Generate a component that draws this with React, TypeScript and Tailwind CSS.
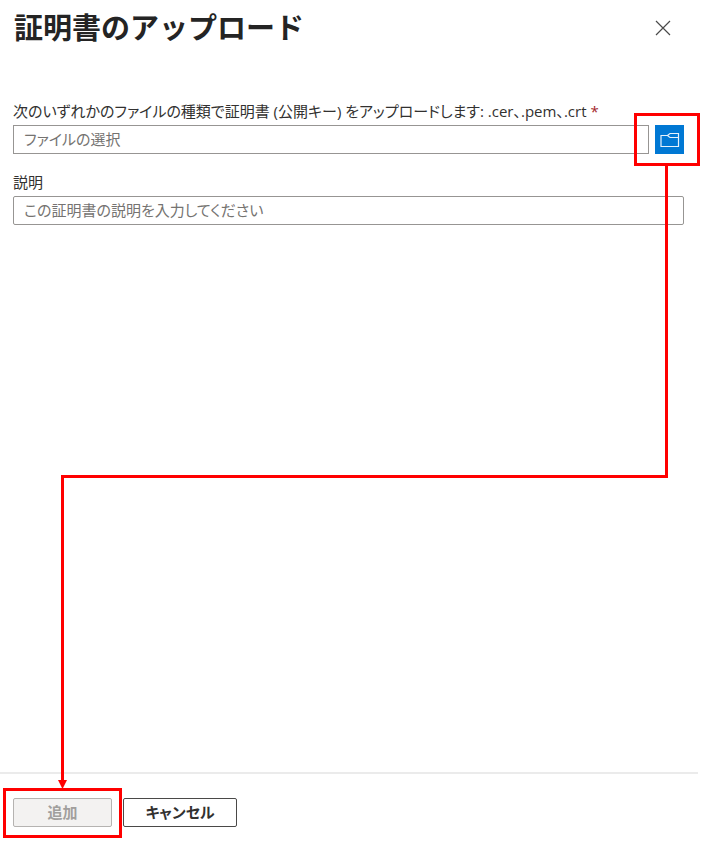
const fieldClass =
  "h-[29px] min-w-0 flex-1 border border-[#979593] bg-white px-[10px] pb-[2px] text-[15px] text-[#323130] outline-none placeholder:text-[#757371] placeholder:opacity-100";

function CloseIcon() {
  return (
    <svg width="16" height="16" viewBox="0 0 16 16" fill="none" stroke="#4a4a4a" strokeWidth="1.2" aria-hidden="true">
      <path d="M1 1l14 14M15 1L1 15" />
    </svg>
  );
}

function FolderIcon() {
  return (
    <svg width="20" height="16" viewBox="0 0 20 16" fill="none" stroke="#e6f2fc" strokeWidth="1.2" aria-hidden="true">
      <path d="M8.5 3.5H1v11h17.5v-13H10L8 3v1l2 1.5h8.5" />
    </svg>
  );
}

/* Red line that leads from the file button down to the add button */
function Connector() {
  return (
    <div className="pointer-events-none absolute inset-0" aria-hidden="true">
      <div className="absolute top-[165px] right-[35px] left-[61px] h-[313px] border-r-3 border-b-3 border-[#ff0000]" />
      <div className="absolute top-[475px] bottom-[62px] left-[61px] w-[3px] bg-[#ff0000]" />
      <svg className="absolute bottom-[55px] left-[57px]" width="11" height="9" viewBox="0 0 11 9">
        <path d="M1 0h9L5.5 9z" fill="#ff0000" />
      </svg>
    </div>
  );
}

export default function App() {
  return (
    <div
      lang="ja"
      className="relative flex min-h-screen flex-col bg-white font-['Open_Sans','Noto_Sans_CJK_JP',sans-serif] text-[#323130]"
    >
      <header className="flex h-14 items-center justify-between pr-[32px] pl-[14px]">
        <h1 className="text-[29px] leading-[50px] font-bold text-[#242424]">証明書のアップロード</h1>
        <button type="button" aria-label="閉じる" className="flex size-4 items-center justify-center">
          <CloseIcon />
        </button>
      </header>

      <main className="flex-1 pt-[43px] pr-[19px] pl-[13px] [font-feature-settings:'palt']">
        <label htmlFor="file" className="block pb-[2px] text-[15px] leading-6">
          次のいずれかのファイルの種類で証明書 (公開キー) をアップロードします: .cer、.pem、.crt{" "}
          <span className="text-[#a4262c]">*</span>
        </label>
        <div className="flex gap-[6px]">
          <input id="file" type="text" readOnly placeholder="ファイルの選択" className={fieldClass} />
          <div className="relative size-[29px]">
            <button
              type="button"
              aria-label="ファイルの参照"
              className="flex size-[29px] items-center justify-center bg-[#0078d4]"
            >
              <FolderIcon />
            </button>
            <div className="pointer-events-none absolute -inset-y-[12px] -right-[16px] -left-[21px] border-3 border-[#ff0000]" />
          </div>
        </div>

        <label htmlFor="description" className="mt-4 block pb-[2px] text-[15px] leading-6">
          説明
        </label>
        <div className="flex">
          <input
            id="description"
            type="text"
            placeholder="この証明書の説明を入力してください"
            className={`${fieldClass} rounded-[2px]`}
          />
        </div>
      </main>

      <footer className="mr-[5px] flex h-[72px] gap-[11px] border-t-2 border-[#ebebeb] pt-6 pl-[13px] [font-feature-settings:'palt']">
        <div className="relative h-[29px] w-[99px]">
          <button
            type="button"
            disabled
            className="h-[29px] w-full rounded-[2px] border border-[#b5b3b1] bg-[#f3f2f1] pb-[2px] text-[15px] leading-6 font-bold text-[#a19f9d]"
          >
            追加
          </button>
          <div className="pointer-events-none absolute -inset-x-[10px] -top-[10px] -bottom-[11px] border-3 border-[#ff0000]" />
        </div>
        <button
          type="button"
          className="h-[29px] w-[114px] rounded-[2px] border border-[#4a4948] bg-white pb-[2px] text-[15px] leading-6 font-bold text-[#323130]"
        >
          キャンセル
        </button>
      </footer>

      <Connector />
    </div>
  );
}
